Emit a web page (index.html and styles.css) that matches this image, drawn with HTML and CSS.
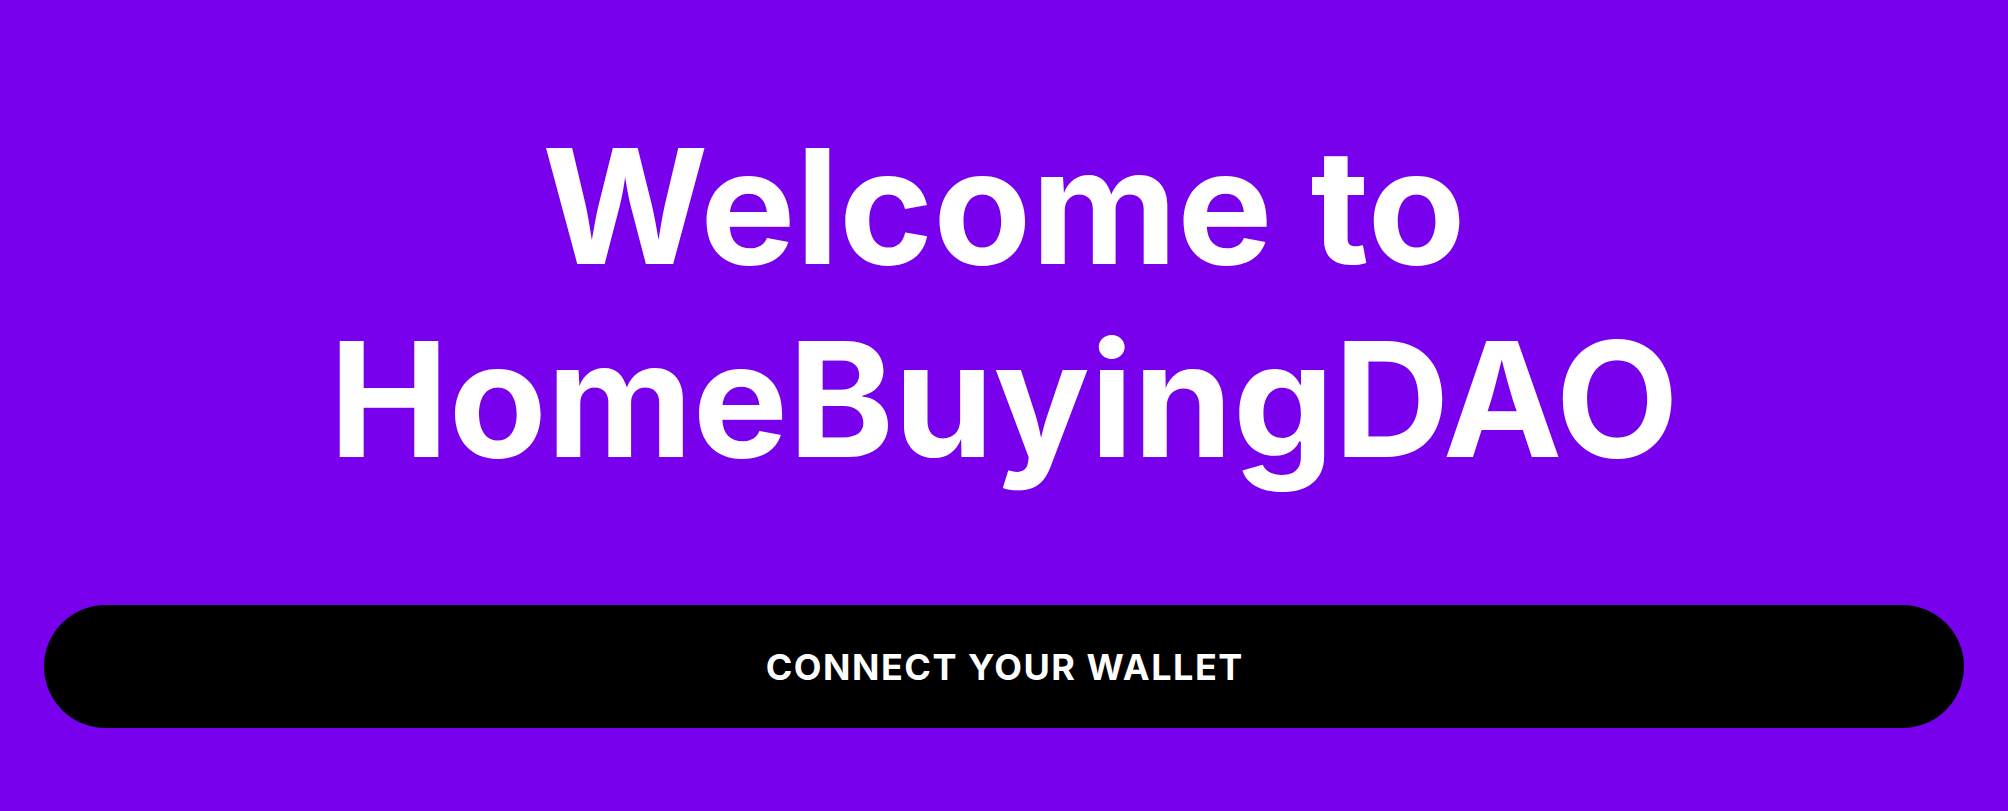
FILE: index.html
```html
<!DOCTYPE html>
<html lang="en">
<head>
<meta charset="utf-8">
<title>HomeBuyingDAO</title>
<link rel="stylesheet" href="styles.css">
</head>
<body>
<main class="page">
  <h1 class="title">Welcome to<br>HomeBuyingDAO</h1>
  <button class="connect" type="button">CONNECT YOUR WALLET</button>
</main>
</body>
</html>
```
FILE: styles.css
```css
html, body {
  margin: 0;
  padding: 0;
  height: 100%;
}
body {
  background: #7900ed;
  font-family: "Inter", "Liberation Sans", sans-serif;
  color: #fff;
}
.page {
  display: flex;
  flex-direction: column;
  align-items: center;
  padding: 110px 42px 0;
}
.title {
  margin: 0;
  font-size: 160px;
  line-height: 193px;
  font-weight: 700;
  text-align: center;
  letter-spacing: 0;
}
.connect {
  margin-top: 109px;
  width: 1920px;
  height: 123px;
  border: 0;
  border-radius: 62px;
  background: #000;
  color: #fff;
  font-family: "Inter", "Liberation Sans", sans-serif;
  font-weight: 700;
  font-size: 36px;
  letter-spacing: 1.5px;
  padding: 0 0 0 1.5px;
  cursor: pointer;
}
```
